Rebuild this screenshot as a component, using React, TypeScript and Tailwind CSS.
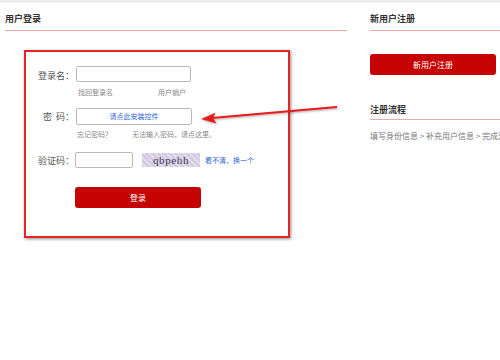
import React from "react";

export default function App() {
  return (
    <div className="relative w-[500px] h-[360px] overflow-hidden bg-white font-['Noto_Sans_CJK_SC','Noto_Sans',sans-serif]">
      <div className="h-[3px] bg-[#eeeeee]" />
      <div className="flex">
        {/* Left column */}
        <div className="ml-[5px] w-[342px] shrink-0">
          <div className="pt-[10px] pb-[5px] border-b border-[#eeaaaa]">
            <div className="text-[9px] leading-[12px] font-bold text-[#333]">用户登录</div>
          </div>
          <div className="ml-[19px] mt-[19px] w-[266px] h-[188px] border-2 border-[#e42525] shadow-[1px_1px_3px_rgba(0,0,0,0.45)]">
            <div className="flex flex-col pt-[14px]">
              {/* Row 1 */}
              <div className="flex items-center h-[16px]">
                <div className="w-[48px] text-right text-[9px] leading-[12px] text-[#555] pt-[3px]">登录名：</div>
                <div className="ml-[2px] w-[115px] h-[16px] border border-[#bbbbbb] rounded-[2px] bg-white" />
              </div>
              <div className="flex h-[9px] mt-[6px] ml-[52px] text-[7px] leading-[9px] text-[#888]">
                <span className="w-[80px]">找回登录名</span>
                <span>用户销户</span>
              </div>
              {/* Row 2 */}
              <div className="flex items-center h-[17px] mt-[11px]">
                <div className="w-[48px] text-right text-[9px] leading-[12px] text-[#555] pt-[1px]">密&nbsp;&nbsp;码：</div>
                <div className="ml-[2px] w-[116px] h-[17px] border border-[#bbbbbb] rounded-[2px] bg-white flex items-center justify-center text-[7px] leading-[9px] text-[#2f63d6]">
                  请点此安装控件
                </div>
              </div>
              <div className="flex h-[9px] mt-[5px] ml-[51px] text-[7px] leading-[9px] text-[#888]">
                <span className="w-[55px]">忘记密码？</span>
                <span>无法输入密码，请点这里。</span>
              </div>
              {/* Row 3 */}
              <div className="flex items-center h-[16px] mt-[13px]">
                <div className="w-[48px] text-right text-[9px] leading-[12px] text-[#555] pt-[2px]">验证码：</div>
                <div className="ml-[1px] w-[58px] h-[16px] border border-[#bbbbbb] rounded-[2px] bg-white" />
                <div className="ml-[9px] w-[58px] h-[14px] flex items-center justify-center font-['Liberation_Serif',serif] font-normal text-[11px] leading-[14px] text-[#3f3552] tracking-[0.6px] bg-[repeating-linear-gradient(45deg,#d4cbe2_0px,#d4cbe2_2px,#e2dcec_2px,#e2dcec_4px)]">
                  qbpehh
                </div>
                <div className="ml-[5px] text-[7px] leading-[9px] text-[#2f63d6]">看不清，换一个</div>
              </div>
              {/* Button */}
              <div className="ml-[49px] mt-[19px] w-[126px] h-[21px] bg-[#c50303] rounded-[3px] flex items-center justify-center text-[8px] leading-[10px] text-white">
                登录
              </div>
            </div>
          </div>
        </div>
        {/* Right column */}
        <div className="ml-[23px] w-[140px] shrink-0">
          <div className="pt-[10px] pb-[5px] border-b border-[#eeaaaa]">
            <div className="text-[9px] leading-[12px] font-bold text-[#333]">新用户注册</div>
          </div>
          <div className="mt-[23px] w-[126px] h-[21px] bg-[#c50303] rounded-[3px] flex items-center justify-center text-[8px] leading-[10px] text-white">
            新用户注册
          </div>
          <div className="mt-[29px] pb-[3px] border-b border-[#eeaaaa]">
            <div className="text-[9px] leading-[12px] font-bold text-[#333]">注册流程</div>
          </div>
          <div className="mt-[11px] whitespace-nowrap text-[8px] leading-[10px] text-[#777]">
            填写身份信息 &gt; 补充用户信息 &gt; 完成注册
          </div>
        </div>
      </div>
      {/* Arrow annotation */}
      <svg className="absolute left-0 top-0 pointer-events-none" width="500" height="360" viewBox="0 0 500 360">
        <defs>
          <filter id="sh" x="-10%" y="-50%" width="120%" height="200%">
            <feDropShadow dx="0.5" dy="1" stdDeviation="0.8" floodColor="#000" floodOpacity="0.35" />
          </filter>
        </defs>
        <g filter="url(#sh)">
          <line x1="337" y1="107" x2="212" y2="118" stroke="#e51c1c" strokeWidth="2" />
          <polygon points="201,119 216.5,123.5 213,118 215.5,112.8" fill="#e51c1c" />
        </g>
      </svg>
    </div>
  );
}
